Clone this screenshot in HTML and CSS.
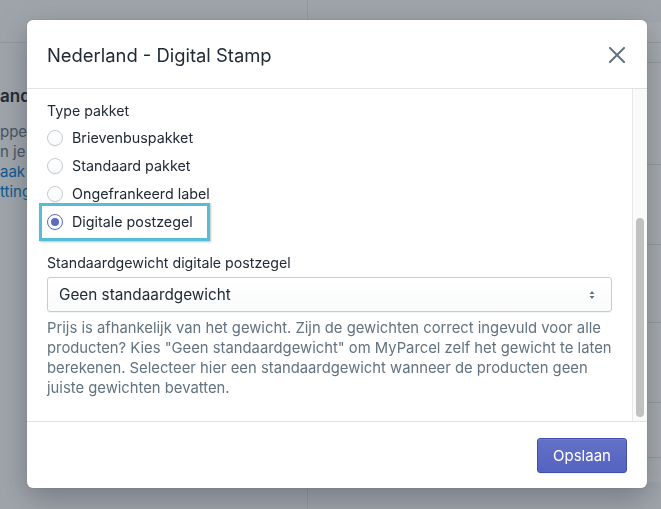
FILE: index.html
```html
<!DOCTYPE html>
<html lang="nl">
<head>
<meta charset="utf-8">
<title>Nederland - Digital Stamp</title>
<link rel="stylesheet" href="styles.css">
</head>
<body>
<div class="page">
  <aside class="side">
    <div class="side-top"></div>
    <div class="side-body">
      <h2 class="side-title">and</h2>
      <p class="side-text">ppel</p>
      <p class="side-text">n je v</p>
      <p class="side-link">aak z</p>
      <p class="side-link">tting</p>
    </div>
  </aside>
  <main class="main">
    <div class="card">
      <div class="card-row r1"></div>
      <div class="card-row r2"></div>
      <div class="card-row r3"></div>
      <div class="card-row r4"></div>
      <div class="card-row r5"></div>
      <div class="card-row r6"></div>
      <div class="card-row r7"></div>
      <div class="card-row r8"></div>
    </div>
  </main>
</div>

<div class="backdrop"></div>

<div class="modal" role="dialog" aria-labelledby="modal-title">
  <header class="modal-header">
    <h1 id="modal-title" class="modal-title">Nederland - Digital Stamp</h1>
    <button class="close" aria-label="Sluiten">
      <svg width="16" height="16" viewBox="0 0 16 16"><path d="M1 1L15 15M15 1L1 15" stroke="#637381" stroke-width="2" stroke-linecap="square" fill="none"/></svg>
    </button>
  </header>
  <div class="modal-body">
    <div class="content">
      <div class="field-label">Type pakket</div>
      <ul class="choices">
        <li class="choice"><span class="radio"></span><span class="choice-label">Brievenbuspakket</span></li>
        <li class="choice"><span class="radio"></span><span class="choice-label">Standaard pakket</span></li>
        <li class="choice"><span class="radio"></span><span class="choice-label">Ongefrankeerd label</span></li>
        <li class="choice"><span class="radio checked"></span><span class="choice-label">Digitale postzegel</span><span class="highlight"></span></li>
      </ul>
      <div class="field-label second">Standaardgewicht digitale postzegel</div>
      <div class="select">
        <span class="select-text">Geen standaardgewicht</span>
        <svg class="select-arrow" width="8" height="12" viewBox="0 0 8 12"><path d="M4 2L6.5 5H1.5Z M4 10L1.5 7H6.5Z" fill="#637381"/></svg>
      </div>
      <p class="help">Prijs is afhankelijk van het gewicht. Zijn de gewichten correct ingevuld voor alle producten? Kies "Geen standaardgewicht" om MyParcel zelf het gewicht te laten berekenen. Selecteer hier een standaardgewicht wanneer de producten geen juiste gewichten bevatten.</p>
    </div>
    <div class="scrollbar"><div class="thumb"></div></div>
  </div>
  <footer class="modal-footer">
    <button class="primary">Opslaan</button>
  </footer>
</div>
</body>
</html>
```
FILE: styles.css
```css
* { box-sizing: border-box; }
html, body { margin: 0; padding: 0; }
body {
  width: 661px;
  height: 509px;
  overflow: hidden;
  background: #f4f6f8;
  font-family: "Inter", "Roboto", "Noto Sans", sans-serif;
  color: #212b36;
}

/* background page */
.page {
  display: flex;
  height: 509px;
}
.side {
  width: 308px;
  flex: none;
  border-right: 1px solid #dfe3e8;
  background: #f4f6f8;
}
.side-top { height: 43px; border-bottom: 1px solid #dfe3e8; }
.side-body {
  padding: 41px 0 0 0;
}
.side-title {
  margin: 0 0 14px;
  font-size: 17px;
  font-weight: 600;
  line-height: 24px;
  color: #212b36;
  white-space: nowrap;
}
.side-text, .side-link {
  margin: 0;
  font-size: 15px;
  line-height: 20px;
  color: #637381;
  white-space: nowrap;
}
.side-link { color: #007ace; }

.main { flex: 1; padding: 22px 0 0 12px; }
.card {
  background: #fff;
  height: 460px;
  border-left: 1px solid #dfe3e8;
}
.card-row { border-bottom: 1px solid #dfe3e8; }
.r1 { height: 21px; }
.r2 { height: 20px; }
.r3 { height: 102px; }
.r4 { height: 80px; }
.r5 { height: 78px; }
.r6 { height: 80px; }
.r7 { height: 55px; }
.r8 { height: 0; border: 0; }

.backdrop {
  position: fixed;
  inset: 0;
  background: rgba(33, 43, 54, 0.4);
}

/* modal */
.modal {
  position: fixed;
  left: 27px;
  top: 20px;
  width: 620px;
  height: 468px;
  background: #fff;
  border-radius: 6px;
  box-shadow: 0 0 0 1px rgba(63,63,68,0.05), 0 10px 30px rgba(33,43,54,0.35);
  display: flex;
  flex-direction: column;
  overflow: hidden;
}
.modal-header {
  height: 69px;
  flex: none;
  display: flex;
  align-items: center;
  justify-content: space-between;
  padding: 0 22px 0 20px;
  border-bottom: 1px solid #dfe3e8;
}
.modal-title {
  margin: 0;
  font-size: 18.4px;
  font-weight: 400;
  line-height: 28px;
  color: #212b36;
  padding-top: 1px;
}
.close {
  border: 0;
  background: none;
  padding: 0;
  width: 16px;
  height: 16px;
  display: block;
  margin-top: 1px;
}
.close svg { display: block; }

.modal-body {
  flex: 1;
  display: flex;
  min-height: 0;
}
.content {
  flex: 1;
  padding: 12px 20px 0 20px;
}
.field-label {
  font-size: 14.2px;
  line-height: 20px;
  color: #212b36;
  margin-bottom: 3px;
}
.field-label.second { margin-top: 17px; margin-bottom: 4px; }
.choices { list-style: none; margin: 0; padding: 0; }
.choice {
  position: relative;
  display: flex;
  align-items: center;
  height: 28px;
}
.radio {
  width: 16px;
  height: 16px;
  border-radius: 50%;
  border: 1px solid #c4cdd5;
  background: linear-gradient(#fff, #f9fafb);
  box-shadow: 0 1px 0 rgba(22,29,37,0.05);
  flex: none;
  margin-right: 9px;
  position: relative;
}
.radio.checked {
  border: 1.5px solid #5c6ac4;
}
.radio.checked::after {
  content: "";
  position: absolute;
  left: 50%;
  top: 50%;
  width: 8px;
  height: 8px;
  margin: -4px 0 0 -4px;
  border-radius: 50%;
  background: #5c6ac4;
}
.choice-label {
  font-size: 14.3px;
  line-height: 20px;
  color: #212b36;
}
.highlight {
  position: absolute;
  left: -8px;
  top: -5px;
  width: 171px;
  height: 38px;
  border: 3px solid #55bdd8;
  box-shadow: 1px 1px 2px rgba(0,0,0,0.25);
  pointer-events: none;
}

.select {
  height: 35px;
  border: 1px solid #c4cdd5;
  border-radius: 3px;
  background: linear-gradient(#fff, #f9fafb);
  box-shadow: 0 1px 0 rgba(22,29,37,0.05);
  display: flex;
  align-items: center;
  justify-content: space-between;
  padding: 0 15px 0 11px;
}
.select-text { font-size: 15.3px; color: #212b36; }
.select-arrow { display: block; }

.help {
  margin: 6px 0 0;
  font-size: 14.8px;
  line-height: 20px;
  color: #637381;
}

.scrollbar {
  width: 15px;
  flex: none;
  background: #fafafa;
  border-left: 1px solid #e8e8e8;
  padding: 129px 3px 4px 3px;
}
.thumb {
  height: 199px;
  border-radius: 4px;
  background: #c1c1c1;
}

.modal-footer {
  flex: none;
  border-top: 1px solid #dfe3e8;
  height: 67px;
  display: flex;
  justify-content: flex-end;
  align-items: flex-start;
  padding: 16px 20px 0 0;
}
.primary {
  height: 35px;
  width: 90px;
  border: 1px solid #3f4eae;
  border-radius: 3px;
  background: linear-gradient(#6371c7, #5563c1);
  box-shadow: inset 0 1px 0 0 #6f7bcb, 0 1px 0 0 rgba(22,29,37,0.05);
  color: #fff;
  font-family: inherit;
  font-size: 15px;
  padding: 0;
}
```
